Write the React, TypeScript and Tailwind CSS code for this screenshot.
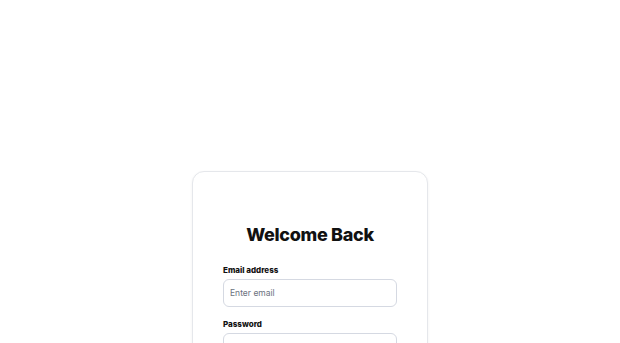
export default function App() {
  return (
    <div
      className="min-h-screen bg-white flex justify-center pt-[171px]"
      style={{ fontFamily: "Inter, 'Liberation Sans', sans-serif" }}
    >
      <div className="w-[236px] rounded-xl border border-[#e5e7eb] bg-white px-[30px] pt-[49px] pb-10 shadow-[0_1px_3px_rgba(0,0,0,0.06)]">
        <h1 className="text-center text-[18px] leading-7 font-extrabold text-[#111111] tracking-[-0.3px]">
          Welcome Back
        </h1>

        <form className="mt-[14px] flex flex-col">
          {/* Email */}
          <label className="text-[8px] leading-[15px] font-extrabold text-[#111111]">
            Email address
          </label>
          <input
            type="email"
            placeholder="Enter email"
            className="mt-px h-7 w-full rounded-md border border-[#d5d9e2] px-[6px] text-[8.5px] text-gray-700 placeholder:text-[#6b7280] outline-none"
          />

          {/* Password */}
          <label className="mt-[10px] text-[8px] leading-[15px] font-extrabold text-[#111111]">
            Password
          </label>
          <input
            type="password"
            placeholder="Enter password"
            className="mt-px h-7 w-full rounded-md border border-[#d5d9e2] px-[6px] text-[8.5px] text-gray-700 placeholder:text-[#6b7280] outline-none"
          />
        </form>
      </div>
    </div>
  );
}
